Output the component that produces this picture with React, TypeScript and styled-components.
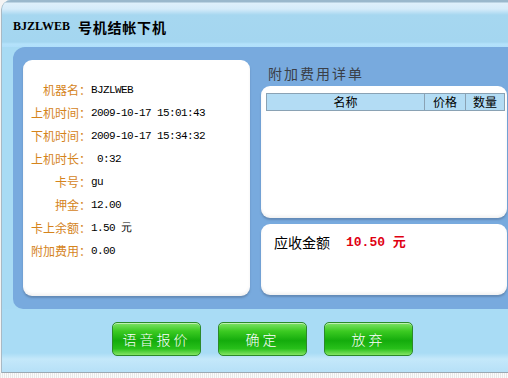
import styled, { createGlobalStyle } from 'styled-components';

const GlobalStyle = createGlobalStyle`
  html, body {
    margin: 0;
    padding: 0;
    background: #f4f4f4;
  }
  body {
    font-family: "Noto Sans CJK SC", "Liberation Sans", sans-serif;
  }
`;

const rows = [
  { label: '机器名：', value: 'BJZLWEB' },
  { label: '上机时间：', value: '2009-10-17 15:01:43' },
  { label: '下机时间：', value: '2009-10-17 15:34:32' },
  { label: '上机时长：', value: '\u00a00:32' },
  { label: '卡号：', value: 'gu' },
  { label: '押金：', value: '12.00' },
  { label: '卡上余额：', value: '1.50 元' },
  { label: '附加费用：', value: '0.00' },
];

const buttons = ['语音报价', '确定', '放弃'];

const App = () => {
  return (
    <>
      <GlobalStyle />
      <Window>
        <TitleBar>
          <TitleCode>BJZLWEB</TitleCode>
          <TitleText>号机结帐下机</TitleText>
        </TitleBar>
        <Body>
          <InfoCard>
            {rows.map((r) => (
              <InfoRow key={r.label}>
                <Label>{r.label}</Label>
                <Value>{r.value}</Value>
              </InfoRow>
            ))}
          </InfoCard>
          <RightColumn>
            <Heading>附加费用详单</Heading>
            <DetailCard>
              <Table>
                <thead>
                  <tr>
                    <HeadCell>名称</HeadCell>
                    <HeadCell width={40}>价格</HeadCell>
                    <HeadCell width={38}>数量</HeadCell>
                  </tr>
                </thead>
              </Table>
            </DetailCard>
            <AmountCard>
              <AmountLabel>应收金额</AmountLabel>
              <AmountValue>10.50 元</AmountValue>
            </AmountCard>
          </RightColumn>
        </Body>
        <Footer>
          {buttons.map((b) => (
            <GreenButton key={b}>{b}</GreenButton>
          ))}
        </Footer>
      </Window>
      <Desktop />
    </>
  );
};

export default App;

const Window = styled.div`
  width: 510px;
  height: 373px;
  margin-left: 1px;
  display: flex;
  flex-direction: column;
  background: #a8dbf4;
  border-left: 1px solid #a9b9c4;
  border-top-left-radius: 10px;
  overflow: hidden;
  box-sizing: border-box;
`;

const TitleBar = styled.div`
  height: 47px;
  flex-shrink: 0;
  display: flex;
  align-items: center;
  gap: 8px;
  padding: 6px 0 0 11px;
  box-sizing: border-box;
  background: linear-gradient(
    #9ab8cc 0px,
    #9ab8cc 2px,
    #dff0fb 3px,
    #d6ecfa 9px,
    #a6d7f0 15px,
    #a4d6f0 42px,
    #b4e2fb 44px,
    #b0dffa 47px
  );
`;

const TitleCode = styled.span`
  font-family: "Liberation Serif", serif;
  font-weight: 700;
  font-size: 12px;
  color: #000;
`;

const TitleText = styled.span`
  font-weight: 700;
  font-size: 14px;
  color: #000;
  letter-spacing: 0.8px;
`;

const Body = styled.div`
  margin-left: 11px;
  height: 262px;
  flex-shrink: 0;
  display: flex;
  gap: 11px;
  padding: 13px 0 13px 10px;
  box-sizing: border-box;
  background: #78aade;
  border-top-left-radius: 12px;
  border-bottom-left-radius: 10px;
`;

const Card = styled.div`
  background: #fff;
  border-radius: 9px;
  box-shadow: 0 2px 2px rgba(60, 80, 110, 0.35), inset 0 -2px 3px rgba(0, 0, 0, 0.06);
`;

const InfoCard = styled(Card)`
  width: 227px;
  flex-shrink: 0;
  padding-top: 18px;
  box-sizing: border-box;
`;

const InfoRow = styled.div`
  display: flex;
  align-items: center;
  height: 23px;
`;

const Label = styled.span`
  width: 68px;
  text-align: right;
  font-size: 12px;
  color: #d5841c;
  white-space: nowrap;
`;

const Value = styled.span`
  font-family: "Liberation Mono", monospace;
  font-size: 11px;
  letter-spacing: -0.6px;
  color: #000;
  white-space: pre;
`;

const RightColumn = styled.div`
  width: 246px;
  display: flex;
  flex-direction: column;
`;

const Heading = styled.div`
  height: 26px;
  line-height: 26px;
  padding-left: 7px;
  font-size: 14px;
  letter-spacing: 2px;
  color: #3a3f48;
`;

const DetailCard = styled(Card)`
  height: 132px;
  padding: 7px 2px 0 5px;
  box-sizing: border-box;
`;

const Table = styled.table`
  width: 100%;
  border-collapse: collapse;
`;

const HeadCell = styled.th<{ width?: number }>`
  width: ${({ width }) => (width ? `${width}px` : 'auto')};
  height: 16px;
  padding: 0 0 0 ${({ width }) => (width ? '0' : '0')};
  background: #b3dcf4;
  border: 1px solid #8aa2b4;
  font-size: 12px;
  font-weight: 400;
  line-height: 14px;
  color: #000;
`;

const AmountCard = styled(Card)`
  height: 71px;
  margin-top: 6px;
  display: flex;
  align-items: flex-start;
  gap: 16px;
  padding: 8px 0 0 13px;
  box-sizing: border-box;
`;

const AmountLabel = styled.span`
  font-size: 14px;
  color: #000;
`;

const AmountValue = styled.span`
  font-family: "Liberation Mono", "Noto Sans CJK SC", monospace;
  font-weight: 700;
  font-size: 13px;
  line-height: 21px;
  color: #e00012;
`;

const Footer = styled.div`
  flex: 1;
  display: flex;
  gap: 17px;
  padding: 13px 0 0 110px;
  box-sizing: border-box;
  background: linear-gradient(#a9dcf5 0, #a9dcf5 44px, #c4e8fa 50px, #b6e0f7 63px);
  border-bottom: 1px solid #9aa8b2;
`;

const GreenButton = styled.button`
  width: 89px;
  height: 34px;
  padding: 0;
  border: 1px solid #2c8a2a;
  border-radius: 5px;
  background: linear-gradient(
    #7fe266 0%,
    #3ccb22 25%,
    #14ac0c 55%,
    #28c01a 80%,
    #84e464 100%
  );
  box-shadow: inset 0 1px 0 rgba(255, 255, 255, 0.5);
  font-family: "Noto Sans CJK SC", sans-serif;
  font-size: 14px;
  font-weight: 300;
  letter-spacing: 3px;
  color: #fff;
  cursor: pointer;
`;

const Desktop = styled.div`
  height: 5px;
  background: repeating-linear-gradient(90deg, #e8e8e8 0 1px, #fbfbfb 1px 2px);
`;
